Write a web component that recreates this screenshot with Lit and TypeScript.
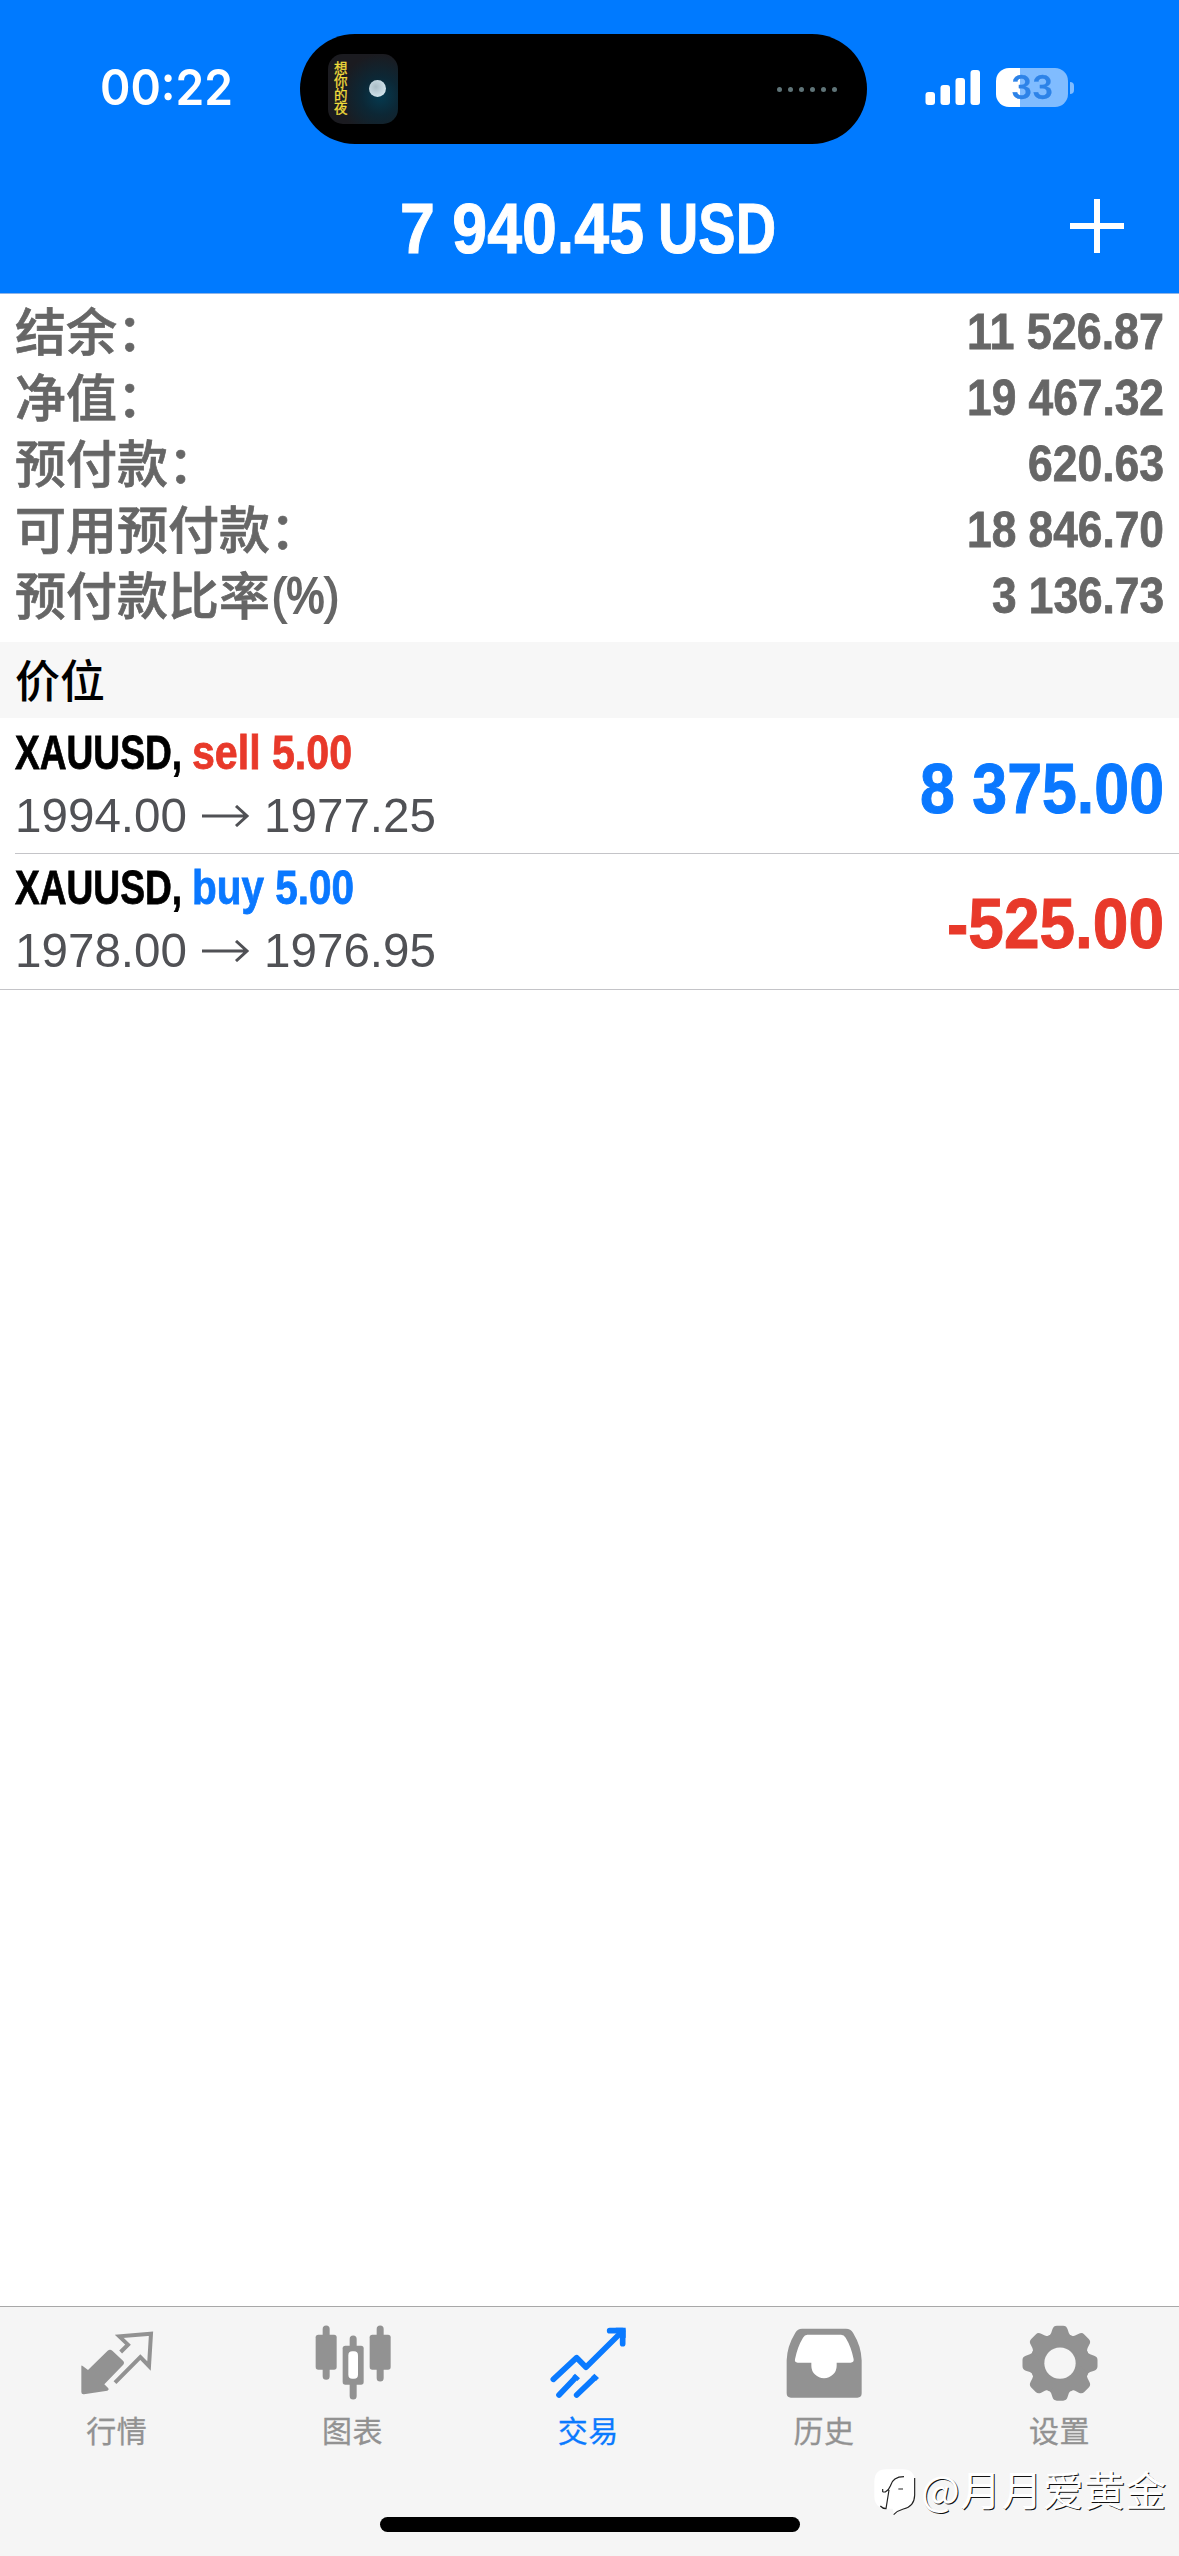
import { LitElement, html, css, svg, nothing } from "lit";
import { customElement, property } from "lit/decorators.js";

/** Single run of text condensed or widened to an exact advance width. */
@customElement("fit-text")
class FitText extends LitElement {
  @property() text = "";
  @property({ type: Number }) size = 48;
  @property({ type: Number }) width = 100;
  @property({ type: Number }) stroke = 0;
  static styles = css`
    :host { display: flex; flex: none; justify-content: flex-start; overflow: visible; }
    .run { display: block; flex: none; white-space: pre; transform-origin: 0 0; line-height: 1; }
  `;
  updated() {
    const run = this.renderRoot.querySelector(".run") as HTMLElement;
    run.style.transform = "none";
    const natural = run.getBoundingClientRect().width;
    if (natural > 0) run.style.transform = `scaleX(${this.width / natural})`;
    this.style.width = `${this.width}px`;
  }
  render() {
    return html`<span class="run" style="font-size:${this.size}px;-webkit-text-stroke:${this.stroke}px currentColor">${this.text}</span>`;
  }
}

const TABS = [
  { id: "quotes", label: "行情", box: "237 106 228 228" },
  { id: "charts", label: "图表", box: "943 106 228 228" },
  { id: "trade", label: "交易", box: "451 106 228 228" },
  { id: "history", label: "历史", box: "16 106 228 228" },
  { id: "settings", label: "设置", box: "724.5 106 228 228" },
];

const gear = () => {
  const teeth = [0, 45, 90, 135, 180, 225, 270, 315];
  return svg`
    <mask id="hub"><rect x="700" y="90" width="280" height="260" fill="#fff"/><circle cx="838.5" cy="220.5" r="47" fill="#000"/></mask>
    <g mask="url(#hub)">
      <circle cx="838.5" cy="220.5" r="90"/>
      ${teeth.map((a) => svg`<path transform="rotate(${a} 838.5 220.5)" d="M801 142 Q809 138 812 130 L816 118 Q819 108 829 108 H848 Q858 108 861 118 L865 130 Q868 138 876 142 V170 H801Z"/>`)}
    </g>`;
};

const ICONS: Record<string, () => unknown> = {
  quotes: () => svg`
    <path d="M244 230 Q244 226 248 229 L264 241 L323 183 Q330 177 337 183 L369 213 Q375 219 369 226 L313 284 L325 296 Q328 301 322 303 L252 314 Q244 315 244 307Z"/>
    <path d="M362 187 L384 165 L358 140 L453 132 L447 229 L421 202 L345 279" fill="none" stroke="currentColor" stroke-width="12"/>`,
  charts: () => svg`
    <path d="M976.5 118V260M1138.5 118V265M1057.5 148V319" stroke="currentColor" stroke-width="21" stroke-linecap="round"/>
    <rect x="945" y="135" width="63" height="105" rx="8"/>
    <rect x="1107" y="135" width="63" height="105" rx="8"/>
    <rect x="1026" y="168" width="63" height="117" rx="8"/>
    <rect x="1043" y="185" width="29" height="82" rx="12" fill="#fff"/>`,
  trade: () => svg`
    <g fill="none" stroke="currentColor" stroke-width="17" stroke-linecap="round" stroke-linejoin="round">
      <path d="M461 269L531 204L559 233L668 125"/>
      <path d="M630 123H669V162"/>
      <path d="M478 316L526 266M531 316L583 266"/>
    </g>
    <path d="M526 252L541 266L533 274L518 260ZM584 252L598 265L589 274L575 261ZM648 114H678V146Z"/>`,
  history: () => svg`
    <path d="M64 117H196Q210 117 217 129Q242 170 243 212V311Q243 324 230 324H31Q18 324 18 311V212Q19 170 44 129Q51 117 64 117Z"/>
    <path d="M80 135H181Q190 135 195 144Q212 172 219 209Q220 219 210 219H168V228A38 38 0 0 1 92 228V219H51Q41 219 43 209Q50 172 67 144Q72 135 80 135Z" fill="#fff"/>`,
  settings: gear,
};

@customElement("tab-item")
class TabItem extends LitElement {
  @property() icon = "";
  @property() label = "";
  @property() box = "";
  static styles = css`
    :host { display: flex; flex-direction: column; align-items: center; color: #929292; }
    :host([active]) { color: #0a7aff; }
    svg { display: block; width: 76px; height: 76px; fill: currentColor; }
    .label { margin-top: 9px; font-size: 30px; line-height: 38px; letter-spacing: 0.5px; -webkit-text-stroke: 0.3px currentColor; }
  `;
  render() {
    return html`<svg viewBox=${this.box}>${ICONS[this.icon]?.() ?? nothing}</svg>
      <div class="label">${this.label}</div>`;
  }
}

const SUMMARY = [
  { label: "结余：", suffix: "", value: "11 526.87", width: 197 },
  { label: "净值：", suffix: "", value: "19 467.32", width: 197 },
  { label: "预付款：", suffix: "", value: "620.63", width: 136 },
  { label: "可用预付款：", suffix: "", value: "18 846.70", width: 197 },
  { label: "预付款比率", suffix: "(%)", value: "3 136.73", width: 172 },
];

const POSITIONS = [
  { side: "sell", lot: "sell 5.00", lotWidth: 160, from: "1994.00", to: "1977.25", profit: "8 375.00", width: 244, tone: "blue" },
  { side: "buy", lot: "buy 5.00", lotWidth: 162, from: "1978.00", to: "1976.95", profit: "-525.00", width: 217, tone: "red" },
];

@customElement("app-root")
class AppRoot extends LitElement {
  static styles = css`
    :host {
      display: flex; flex-direction: column; position: relative;
      width: 1179px; height: 2556px; background: #fff; overflow: hidden;
      font-family: "Liberation Sans", "Noto Sans CJK SC", sans-serif;
    }
    .header { background: #007aff; color: #fff; border-bottom: 1px solid #8fb4e6; box-sizing: border-box; height: 294px; }
    .status { display: flex; box-sizing: border-box; padding-top: 34px; height: 144px; align-items: flex-start; }
    .time { margin: 29px 0 0 100px; width: 200px; font-family: Inter, sans-serif; font-weight: 600; }
    .island { width: 567px; height: 110px; border-radius: 55px; background: #000; display: flex; align-items: center; justify-content: space-between; box-sizing: border-box; padding: 0 30px 0 28px; }
    .art { width: 70px; height: 70px; border-radius: 15px; display: flex; align-items: center; justify-content: space-between; box-sizing: border-box; padding: 0 12px 0 6px;
      background: radial-gradient(circle at 75% 60%, #053a50 0, #0c2735 28%, #1b1b20 62%); margin-top: -1px; }
    .song { font-size: 13.5px; line-height: 13.5px; width: 14px; color: #f0dc3c; -webkit-text-stroke: 0.3px currentColor; }
    .moon { width: 17px; height: 17px; border-radius: 50%; background: radial-gradient(circle at 40% 40%, #a9bcc6, #d2e4ec 75%); }
    .dots { display: flex; gap: 6px; }
    .dot { width: 5px; height: 5px; border-radius: 50%; background: #5f7478; }
    .signal { display: block; margin: 34px 0 0 58px; }
    .battery { display: flex; align-items: center; margin: 34px 0 0 15px; }
    .cell { width: 72px; height: 39px; border-radius: 13px; display: flex; align-items: center; justify-content: center; box-sizing: border-box;
      background: linear-gradient(90deg, #fff 24px, #80bcff 24px); color: #2d83e8; font-family: Inter, sans-serif; font-weight: 600; }
    .nub { width: 4px; height: 12px; margin-left: 2px; border-radius: 0 4px 4px 0; background: #80bcff; }
    .titlebar { display: flex; align-items: flex-start; font-weight: 700; padding: 49px 0 0 400px; }
    .usd { margin-left: 14px; }
    .plus { margin: 6px 0 0 294px; display: block; }
    .summary { box-sizing: border-box; padding: 5px 15px 12px 15px; color: #666; height: 348px; }
    .line { display: flex; justify-content: space-between; align-items: center; height: 66px; }
    .name { display: flex; align-items: center; }
    .cjk { margin-top: -6px; font-size: 51px; line-height: 60px; font-weight: 500; font-family: "Noto Sans CJK SC", sans-serif; -webkit-text-stroke: 0.7px currentColor; }
    .suffix { margin-left: 2px; }
    .value { font-weight: 700; }
    .section { height: 76px; line-height: 74px; background: #f7f7f7; padding-left: 15px; font-size: 45px; font-weight: 500; font-family: "Noto Sans CJK SC", sans-serif; }
    .position { height: 136px; box-sizing: border-box; margin-left: 15px; border-bottom: 1px solid #c4c4c8; display: flex; justify-content: space-between; padding: 11px 15px 0 0; }
    .position.last { margin-left: 0; padding: 10px 15px 0 15px; }
    .symbol { display: flex; gap: 10px; font-weight: 700; }
    .prices { display: flex; align-items: center; margin-top: 15px; color: #505155; gap: 14.5px; }
    .profit { font-weight: 700; margin-top: 24px; }
    .red { color: #e8392a; }
    .blue { color: #0a78ff; }
    .space { flex: 1; }
    .tabs { height: 250px; box-sizing: border-box; border-top: 1px solid #a8a8a8; background: #f5f5f5; display: flex; flex-direction: column; align-items: center; font-family: "Noto Sans CJK SC", sans-serif; }
    .items { display: grid; box-sizing: border-box; grid-template-columns: repeat(5, 235.7px); width: 1179px; margin-left: -2px; padding-top: 18px; height: 210px; }
    .home { width: 420px; height: 15px; border-radius: 8px; background: #000; }
    .mark { position: absolute; left: 874px; top: 2459px; display: flex; align-items: center; gap: 5px; color: #fff; white-space: nowrap;
      font: 400 41px/56px "Noto Sans CJK SC", sans-serif; letter-spacing: 0.3px; text-shadow: 1px 1px 0 #111; }
    .mark svg { display: block; margin-top: 9px; }
  `;

  render() {
    return html`
      <div class="header">
        <div class="status">
          <div class="time"><fit-text text="00:22" size="49" width="133"></fit-text></div>
          <div class="island">
            <div class="art"><div class="song">想你的夜</div><div class="moon"></div></div>
            <div class="dots">${[1, 2, 3, 4, 5, 6].map(() => html`<div class="dot"></div>`)}</div>
          </div>
          <svg class="signal" width="56" height="38" fill="#fff">
            <rect x="0.5" y="24" width="9.5" height="13" rx="3"/><rect x="15.5" y="17" width="9.5" height="20" rx="3"/>
            <rect x="30.5" y="10" width="9.5" height="27" rx="3"/><rect x="45.5" y="2" width="9.5" height="35" rx="3"/>
          </svg>
          <div class="battery"><div class="cell"><fit-text text="33" size="32" width="42" stroke="0.3"></fit-text></div><div class="nub"></div></div>
        </div>
        <div class="titlebar">
          <fit-text text="7 940.45" size="71" width="244" stroke="1"></fit-text>
          <fit-text class="usd" text="USD" size="71" width="118" stroke="1"></fit-text>
          <svg class="plus" width="54" height="54"><path d="M0 27H54M27 0V54" stroke="#fff" stroke-width="6"/></svg>
        </div>
      </div>
      <div class="summary">
        ${SUMMARY.map((r) => html`<div class="line">
          <div class="name"><span class="cjk">${r.label}</span>${r.suffix ? html`<fit-text class="suffix" text=${r.suffix} size="50" width="67" stroke="1.8"></fit-text>` : nothing}</div>
          <fit-text class="value" text=${r.value} size="50" width=${r.width} stroke="0.8"></fit-text></div>`)}
      </div>
      <div class="section">价位</div>
      ${POSITIONS.map((p, i) => html`
        <div class="position ${i === POSITIONS.length - 1 ? "last" : ""}">
          <div>
            <div class="symbol">
              <fit-text text="XAUUSD," size="48" width="167" stroke="0.8"></fit-text>
              <fit-text class=${p.side === "sell" ? "red" : "blue"} text=${p.lot} size="48" width=${p.lotWidth} stroke="0.8"></fit-text>
            </div>
            <div class="prices">
              <fit-text text=${p.from} size="48" width="172"></fit-text>
              <svg width="48" height="22" fill="none" stroke="currentColor" stroke-width="3"><path d="M0 11H45M34 1L45 11L34 21"/></svg>
              <fit-text text=${p.to} size="48" width="172"></fit-text>
            </div>
          </div>
          <fit-text class="profit ${p.tone}" text=${p.profit} size="71" width=${p.width} stroke="1"></fit-text>
        </div>`)}
      <div class="space"></div>
      <div class="tabs">
        <div class="items">
          ${TABS.map((t) => html`<tab-item icon=${t.id} label=${t.label} box=${t.box} ?active=${t.id === "trade"}></tab-item>`)}
        </div>
        <div class="home"></div>
      </div>
      <div class="mark">
        <svg width="42" height="48" viewBox="284 540 126 144">
          <path d="M320 544H370Q407 544 407 582V622Q406 658 372 662Q354 665 344 680L340 662H320Q285 660 285 625V582Q285 544 320 544Z" fill="#fff"/>
          <path d="M406 570V622Q405 656 372 663Q356 667 343 680M310 612H318Q330 604 333 594Q340 566 374 566M310 612V603M329 606L320 662Q310 662 303 654M357 603H371" fill="none" stroke="#222" stroke-width="3.500"/>
        </svg>
        <span>@月月爱黄金</span>
      </div>
    `;
  }
}
